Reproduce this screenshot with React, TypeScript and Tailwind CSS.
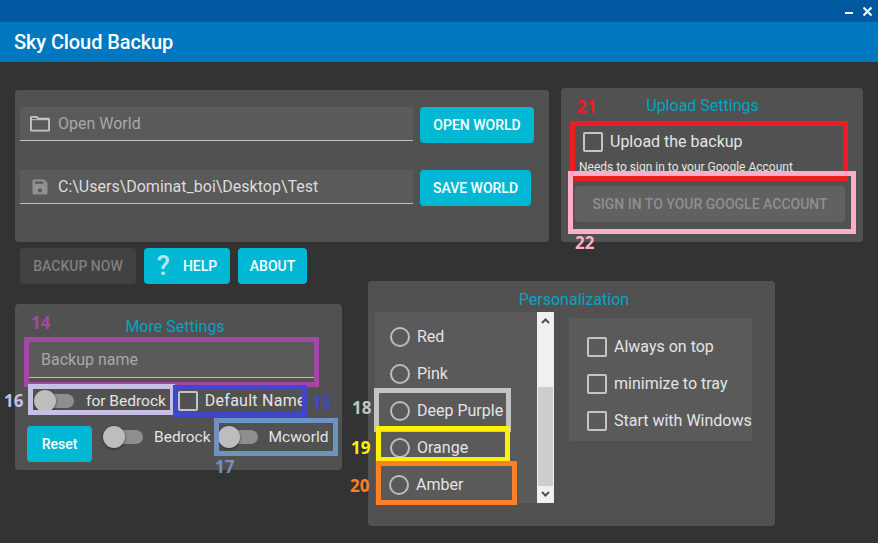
import { ReactNode } from 'react';

function Checkbox({ label, className = '', labelClass = '' }: { label: string; className?: string; labelClass?: string }) {
  return (
    <div className={`flex items-center gap-[7px] ${className}`}>
      <div className="h-5 w-5 shrink-0 rounded-[2px] border-2 border-[#c4c4c4]" />
      <span className={`whitespace-nowrap text-base text-[#e4e4e4] ${labelClass}`}>{label}</span>
    </div>
  );
}

function Toggle({ label, gap }: { label: string; gap: string }) {
  return (
    <div className={`flex items-center ${gap}`}>
      <div className="relative h-[14px] w-[34px] shrink-0 rounded-full bg-[#8e8e8e]">
        <div className="absolute -top-[4px] -left-[6px] h-[22px] w-[22px] rounded-full bg-[#bdbdbd] shadow-[0_1px_3px_rgba(0,0,0,0.5)]" />
      </div>
      <span className="whitespace-nowrap text-[15.5px] leading-6 text-[#e4e4e4]">{label}</span>
    </div>
  );
}

function Radio({ label, className = '' }: { label: string; className?: string }) {
  return (
    <div className={`flex h-[37px] items-center gap-[7px] ${className}`}>
      <div className="h-5 w-5 rounded-full border-2 border-[#bdbdbd]" />
      <span className="text-base text-[#e4e4e4]">{label}</span>
    </div>
  );
}

function CyanButton({ children, className = '' }: { children: ReactNode; className?: string }) {
  return (
    <button className={`flex h-9 items-center justify-center rounded-[4px] bg-[#00b8d4] text-sm font-medium text-white ${className}`}>
      {children}
    </button>
  );
}

function PathField({ icon, text, muted }: { icon: ReactNode; text: string; muted?: boolean }) {
  return (
    <div className="flex h-[34px] w-[393px] items-center border-b border-[#c0c0c0] bg-[#5a5a5a] pl-[10px]">
      <div className="flex w-5 justify-center">{icon}</div>
      <span className={`ml-2 text-base ${muted ? 'text-[#a8a8a8]' : 'text-[#dcdcdc]'}`}>{text}</span>
    </div>
  );
}

const frames = [
  'left-[570px] top-[121px] h-[60px] w-[278px] border-[#ed1c24]',
  'left-[568px] top-[171px] h-[63px] w-[288px] border-[#ffaec9]',
  'left-[24px] top-[337px] h-[50px] w-[295px] border-[#a349a4]',
  'left-[28px] top-[384px] h-[31px] w-[147px] border-[#c8bfe7]',
  'left-[173px] top-[385px] h-[32px] w-[134px] border-[#3f48cc]',
  'left-[214px] top-[418px] h-[38px] w-[124px] border-[#7092be]',
  'left-[374px] top-[388px] h-[44px] w-[137px] border-[#c3c3c3]',
  'left-[376px] top-[426px] h-[36px] w-[134px] border-[#fff200]',
  'left-[376px] top-[461px] h-[44px] w-[141px] border-[#ff7f27]',
];

const marks = [
  { text: '21', cls: 'left-[577px] top-[96px] text-[#ed1c24]' },
  { text: '22', cls: 'left-[575px] top-[232px] text-[#ffaec9]' },
  { text: '14', cls: 'left-[31px] top-[312px] text-[#a349a4]' },
  { text: '16', cls: 'left-[4px] top-[390px] text-[#c8bfe7]' },
  { text: '15', cls: 'left-[312px] top-[392px] text-[#3f48cc]' },
  { text: '17', cls: 'left-[215px] top-[456px] text-[#7092be]' },
  { text: '18', cls: 'left-[352px] top-[397px] text-[#c3c3c3]' },
  { text: '19', cls: 'left-[351px] top-[437px] text-[#fff200]' },
  { text: '20', cls: 'left-[350px] top-[475px] text-[#ff7f27]' },
];

export default function App() {
  return (
    <div className="relative flex h-[543px] w-[878px] flex-col overflow-hidden bg-[#333333] font-['Roboto',sans-serif]">
      <div className="flex h-[22px] items-center justify-end gap-[9px] bg-[#0058a0] pr-[5px]">
        <div className="mt-[4px] h-[2px] w-2 bg-white" />
        <svg width="11" height="11" viewBox="0 0 11 11" stroke="white" strokeWidth="2">
          <path d="M1.5 1.5l8 8M9.5 1.5l-8 8" />
        </svg>
      </div>
      <div className="flex h-10 items-center bg-[#0078bf] pl-[14px] text-xl font-medium tracking-[-0.1px] text-white">Sky Cloud Backup</div>

      <div className="flex items-start pl-[15px] pt-[26px]">
        <div className="mt-[2px] flex h-[152px] w-[534px] gap-[7px] rounded-[4px] bg-[#515151] pl-[5px] pt-[17px]">
          <div className="flex flex-col gap-[29px]">
            <PathField
              muted
              text="Open World"
              icon={
                <svg width="21" height="17" viewBox="0 0 21 17" fill="none" stroke="#c4c4c4" strokeWidth="2">
                  <path d="M1 15.5V2.5a1 1 0 0 1 1-1h5l2 2h10.500a.5.5 0 0 1 .5.5v11.500a.5.5 0 0 1-.5.5H1.500a.5.5 0 0 1-.5-.5z" />
                  <path d="M1 4.500h19" strokeWidth="1" />
                </svg>
              }
            />
            <PathField
              text="C:\Users\Dominat_boi\Desktop\Test"
              icon={
                <svg width="24" height="24" viewBox="0 0 24 24" fill="#909090" fillRule="evenodd">
                  <path d="M17 3H5c-1.100 0-2 .9-2 2v14c0 1.100.89 2 2 2h14c1.100 0 2-.9 2-2V7l-4-4zM12 18.500a2.500 2.500 0 1 1 0-5 2.500 2.500 0 0 1 0 5zM16 8H6V5.500h10V8z" />
                </svg>
              }
            />
          </div>
          <div className="flex flex-col items-start gap-[27px]">
            <CyanButton className="w-[114px]">OPEN WORLD</CyanButton>
            <CyanButton className="w-[111px]">SAVE WORLD</CyanButton>
          </div>
        </div>

        <div className="ml-3 flex h-[154px] w-[302px] flex-col rounded-[4px] bg-[#515151] pt-[6px]">
          <div className="pr-[19px] text-center text-base text-[#00a5c4]">Upload Settings</div>
          <Checkbox label="Upload the backup" className="ml-[22px] mt-[12px]" />
          <div className="ml-[18px] mt-[5px] text-xs text-[#e4e4e4]">Needs to sign in to your Google Account</div>
          <button className="ml-[14px] mt-[11px] h-9 w-[270px] rounded-[4px] bg-[#616161] text-sm font-medium text-[#8f8f8f]">
            SIGN IN TO YOUR GOOGLE ACCOUNT
          </button>
        </div>
      </div>

      <div className="flex items-start pl-[15px] pt-[6px]">
        <div className="w-[327px]">
          <div className="flex gap-2 pl-[5px]">
            <button className="h-9 w-[116px] rounded-[4px] bg-[#424242] text-sm font-medium text-[#7f7f7f]">BACKUP NOW</button>
            <CyanButton className="w-[86px] gap-[13px]">
              <span className="text-[27px] font-medium leading-none text-[#b0eaf3]">?</span>
              <span>HELP</span>
            </CyanButton>
            <CyanButton className="w-[69px]">ABOUT</CyanButton>
          </div>

          <div className="mt-5 h-[166px] rounded-[4px] bg-[#515151] pt-[11px]">
            <div className="pr-[7px] text-center text-base text-[#00a5c4]">More Settings</div>
            <div className="ml-[14px] mt-[3px] flex h-[36px] w-[285px] items-center border-b border-[#c0c0c0] bg-[#5a5a5a] pl-[12px] pt-px text-base text-[#a8a8a8]">
              Backup name
            </div>
            <div className="ml-[25px] mt-[11px] flex items-center">
              <Toggle label="for Bedrock" gap="gap-[12px]" />
              <Checkbox label="Default Name" className="ml-[12px]" labelClass="tracking-[0.25px]" />
            </div>
            <div className="ml-[12px] mt-[13px] flex items-start">
              <CyanButton className="w-[65px]">Reset</CyanButton>
              <div className="ml-[17px] mt-[-1px] flex items-center gap-[13px]">
                <Toggle label="Bedrock" gap="gap-[11px]" />
                <Toggle label="Mcworld" gap="gap-[11px]" />
              </div>
            </div>
          </div>
        </div>

        <div className="ml-[26px] mt-[33px] flex h-[245px] w-[407px] flex-col rounded-[4px] bg-[#515151] pl-[7px] pt-[7px]">
          <div className="pr-[2px] text-center text-base text-[#00a5c4]">Personalization</div>
          <div className="flex items-start">
            <div className="flex h-[191px] w-[179px]">
              <div className="h-full w-[162px] bg-[#5a5a5a] pl-[15px] pt-[6px]">
                <Radio label="Red" />
                <Radio label="Pink" />
                <Radio label="Deep Purple" />
                <Radio label="Orange" />
                <Radio label="Amber" className="-ml-px" />
              </div>
              <div className="flex h-full w-[17px] flex-col bg-[#f0f0f0]">
                <svg className="mt-[6px] self-center" width="9" height="6" viewBox="0 0 9 6" fill="none" stroke="#505050" strokeWidth="2">
                  <path d="M1 5l3.500-3.500L8 5" />
                </svg>
                <div className="mx-px mt-[63px] h-[99px] bg-[#cdcdcd]" />
                <svg className="mt-[5px] self-center" width="9" height="6" viewBox="0 0 9 6" fill="none" stroke="#505050" strokeWidth="2">
                  <path d="M1 1l3.500 3.500L8 1" />
                </svg>
              </div>
            </div>
            <div className="ml-[15px] mt-[6px] flex h-[123px] w-[183px] flex-col gap-[13px] bg-[#5a5a5a] pl-[18px] pt-[17px]">
              <Checkbox label="Always on top" />
              <Checkbox label="minimize to tray" />
              <Checkbox label="Start with Windows" />
            </div>
          </div>
        </div>
      </div>

      {frames.map((cls) => (
        <div key={cls} className={`absolute border-[5px] ${cls}`} />
      ))}
      {marks.map((m) => (
        <div key={m.text} className={`absolute font-['Open_Sans',sans-serif] text-[17px] font-bold leading-[22px] ${m.cls}`}>
          {m.text}
        </div>
      ))}
    </div>
  );
}
